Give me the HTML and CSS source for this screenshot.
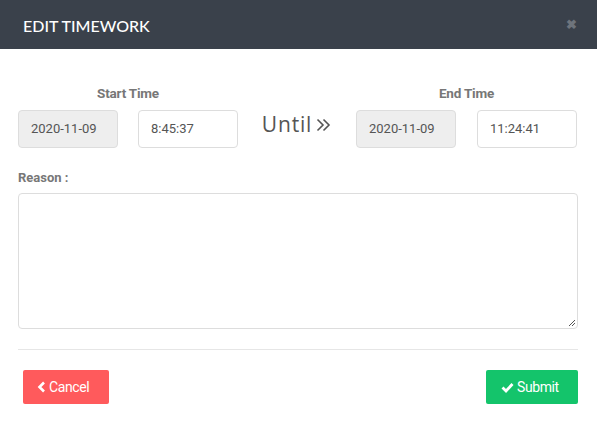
FILE: index.html
```html
<!DOCTYPE html>
<html>
<head>
<meta charset="utf-8">
<link rel="stylesheet" href="styles.css">
</head>
<body>
<div class="modal">
  <div class="modal-header">
    <span class="title">EDIT TIMEWORK</span>
    <span class="close">&#10006;</span>
  </div>
  <div class="modal-body">
    <div class="time-row">
      <div class="group">
        <div class="label">Start Time</div>
        <div class="inputs">
          <div class="input readonly">2020-11-09</div>
          <div class="input">8:45:37</div>
        </div>
      </div>
      <div class="until">Until<svg class="raquo" width="15" height="14" viewBox="0 0 15 14"><path d="M1.5 1.5 L7 7 L1.5 12.5 M7.5 1.5 L13 7 L7.5 12.5" fill="none" stroke="#555" stroke-width="1.6"/></svg></div>
      <div class="group">
        <div class="label">End Time</div>
        <div class="inputs">
          <div class="input readonly">2020-11-09</div>
          <div class="input">11:24:41</div>
        </div>
      </div>
    </div>
    <div class="reason-label">Reason :</div>
    <div class="textarea">
      <svg class="grip" width="9" height="9" viewBox="0 0 9 9"><path d="M8 2 L2 8 M8 5 L5 8" stroke="#555" stroke-width="1"/></svg>
    </div>
    <hr class="divider">
    <div class="footer">
      <button class="btn cancel"><svg width="9" height="12" viewBox="0 0 9 12"><path d="M7 1.5 L2.5 6 L7 10.5" fill="none" stroke="#fff" stroke-width="2.6"/></svg>Cancel</button>
      <button class="btn submit"><svg width="13" height="11" viewBox="0 0 13 11"><path d="M1.5 5.5 L5 9 L11.5 2" fill="none" stroke="#fff" stroke-width="2.8"/></svg>Submit</button>
    </div>
  </div>
</div>
</body>
</html>
```

FILE: styles.css
```css
* { box-sizing: border-box; }
html, body { margin: 0; padding: 0; background: #fff; }
body { font-family: Roboto, "Liberation Sans", sans-serif; }
.modal { width: 597px; height: 423px; }
.modal-header {
  height: 49px;
  background: #3a414b;
  display: flex;
  align-items: center;
  justify-content: space-between;
  padding: 0 20px 0 23px;
}
.title { color: #fff; font-family: Lato, "Open Sans", sans-serif; font-size: 16px; font-weight: 500; padding-top: 1px; }
.close { color: #6e747c; font-size: 13px; font-weight: bold; }
.modal-body { padding: 36px 18px 0 18px; }
.time-row { display: flex; align-items: flex-start; }
.group { width: 220px; }
.group + .until + .group { width: 221px; }
.group + .until + .group .inputs { gap: 21px; }
.label { text-align: center; color: #777; font-weight: 700; font-size: 13.5px; height: 25px; line-height: 16px; letter-spacing: -0.2px; }
.inputs { display: flex; gap: 20px; }
.input {
  width: 100px; height: 38px; border: 1px solid #ddd; border-radius: 4px;
  padding: 0 12px; font-size: 13px; color: #555; line-height: 36px; background: #fff;
}
.input.readonly { background: #eee; }
.until {
  width: 118px; display: flex; justify-content: center; align-items: center; gap: 4px;
  font-family: "Open Sans", sans-serif; font-weight: 400;
  font-size: 21px; color: #555; padding-top: 25px; padding-left: 1px; padding-right: 2px; letter-spacing: 0.8px;
}
.raquo { margin-top: 1px; }
.reason-label { color: #777; font-weight: 700; font-size: 13px; margin-top: 22px; height: 23px; line-height: 16px; }
.textarea {
  position: relative; width: 560px; height: 136px; border: 1px solid #ddd; border-radius: 4px;
}
.grip { position: absolute; right: 1px; bottom: 1px; }
.divider { border: 0; border-top: 1px solid #e6e6e6; margin: 20px 0 0 0; width: 560px; }
.footer { display: flex; justify-content: space-between; padding: 20px 1px 0 5px; }
.btn {
  height: 34px; border: 0; border-radius: 2px; color: #fff; font-family: Roboto, sans-serif;
  font-size: 14px; display: flex; align-items: center; gap: 3px; padding: 0 12px 0 14px;
  letter-spacing: -0.4px;
}
.cancel { background: #ff5a5c; width: 86px; }
.submit { background: #14c46b; width: 92px; padding-left: 15px; }
```
